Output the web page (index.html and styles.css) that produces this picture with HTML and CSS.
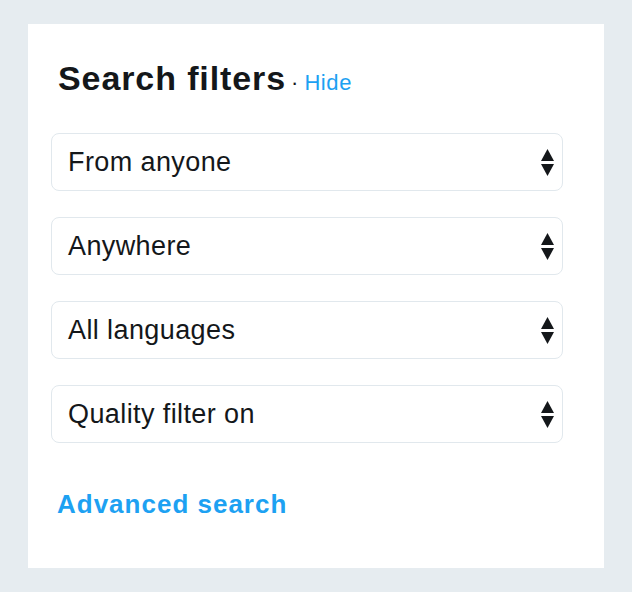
FILE: index.html
```html
<!DOCTYPE html>
<html>
<head>
<meta charset="utf-8">
<link rel="stylesheet" href="styles.css">
</head>
<body>
<div class="card">
  <div class="title"><span class="title-text">Search filters</span><span class="sep">·</span><a class="hide">Hide</a></div>
  <div class="selects">
    <div class="select"><span>From anyone</span><svg class="arrows" width="13" height="27" viewBox="0 0 13 27"><polygon points="0,12 6.5,0 13,12" fill="#14171a"/><polygon points="0,15 13,15 6.5,27" fill="#14171a"/></svg></div>
    <div class="select"><span>Anywhere</span><svg class="arrows" width="13" height="27" viewBox="0 0 13 27"><polygon points="0,12 6.5,0 13,12" fill="#14171a"/><polygon points="0,15 13,15 6.5,27" fill="#14171a"/></svg></div>
    <div class="select"><span>All languages</span><svg class="arrows" width="13" height="27" viewBox="0 0 13 27"><polygon points="0,12 6.5,0 13,12" fill="#14171a"/><polygon points="0,15 13,15 6.5,27" fill="#14171a"/></svg></div>
    <div class="select"><span>Quality filter on</span><svg class="arrows" width="13" height="27" viewBox="0 0 13 27"><polygon points="0,12 6.5,0 13,12" fill="#14171a"/><polygon points="0,15 13,15 6.5,27" fill="#14171a"/></svg></div>
  </div>
  <a class="advanced">Advanced search</a>
</div>
</body>
</html>
```
FILE: styles.css
```css
html, body {
  margin: 0;
  padding: 0;
}
body {
  background: #e6ecf0;
  padding: 24px 28px;
  font-family: "Liberation Sans", Arial, sans-serif;
  color: #14171a;
}
.card {
  box-sizing: border-box;
  width: 576px;
  height: 544px;
  background: #fff;
  padding: 34px 41px 0 23px;
  display: flex;
  flex-direction: column;
}
.title {
  margin-left: 7px;
  height: 40px;
  display: flex;
  align-items: baseline;
  white-space: nowrap;
}
.title-text {
  font-size: 34px;
  line-height: 40px;
  font-weight: bold;
  letter-spacing: 0.9px;
}
.sep {
  font-size: 22px;
  margin: 0 6px 0 5px;
}
.hide {
  font-size: 22px;
  color: #1da1f2;
  letter-spacing: 0.6px;
}
.selects {
  margin-top: 35px;
  display: flex;
  flex-direction: column;
  gap: 26px;
}
.select {
  box-sizing: border-box;
  height: 58px;
  border: 1px solid #e1e8ed;
  border-radius: 8px;
  display: flex;
  align-items: center;
  justify-content: space-between;
  padding: 0 8px 0 16px;
  font-size: 27px;
  letter-spacing: 0.4px;
}
.arrows {
  display: block;
}
.advanced {
  margin-top: 46px;
  margin-left: 6px;
  font-size: 26px;
  line-height: 30px;
  font-weight: bold;
  color: #1da1f2;
  letter-spacing: 1px;
}
```
